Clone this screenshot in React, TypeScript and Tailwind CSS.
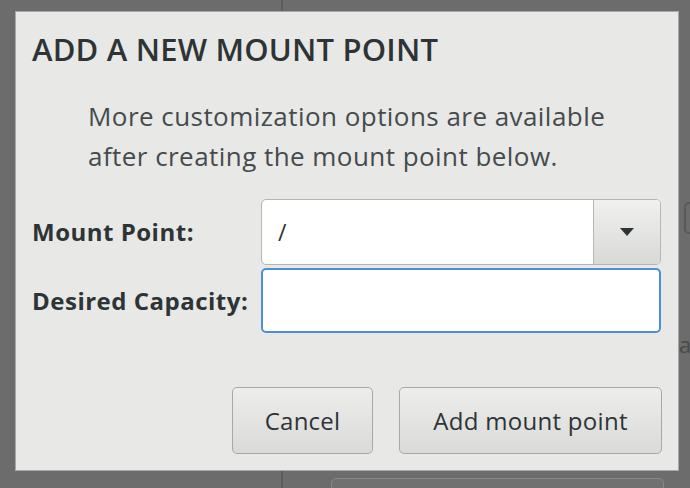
export default function App() {
  return (
    <div className="relative w-[690px] h-[488px] overflow-hidden bg-[#6c6c6c] font-['Open_Sans',sans-serif]">
      {/* stuff behind the dialog */}
      <div className="absolute left-[281px] top-0 h-full w-[2px] bg-[#5c5c5c]" />
      <div className="absolute left-[684px] top-[202px] w-[20px] h-[32px] rounded-[5px] border-2 border-[#5a5a5a]" />
      <div className="absolute left-[679px] top-[328px] text-[22px] text-[#4a4a4a]">a</div>
      <div className="absolute left-[331px] top-[478px] w-[333px] h-[20px] rounded-t-[5px] border border-[#888] bg-[#707070]" />

      {/* dialog */}
      <div className="absolute left-[15px] top-[11px] w-[664px] h-[460px] bg-[#e8e8e7] border border-[#a8a8a8] flex flex-col text-[#2e3436]">
        <h1 className="pl-[16px] pt-[17px] text-[31px] leading-[40px] font-semibold tracking-[0.2px]">
          ADD A NEW MOUNT POINT
        </h1>
        <p className="pl-[72px] pt-[27px] text-[26px] leading-[40px] tracking-[0.45px] text-[#454b4d]">
          More customization options are available
          <br />
          after creating the mount point below.
        </p>

        <div className="mt-[23px] pr-[16px] grid grid-cols-[245px_400px] gap-y-[3px] items-center">
          <label className="pl-[16px] text-[24px] font-bold tracking-[0.5px]">Mount Point:</label>
          <div className="flex h-[66px] rounded-[5px] border border-[#b6b6b3] bg-white overflow-hidden">
            <div className="flex-1 flex items-center pl-[16px] text-[23px]">/</div>
            <div className="w-[67px] flex items-center justify-center border-l border-[#b6b6b3] bg-gradient-to-b from-[#f0f0ef] to-[#d9d9d8]">
              <svg width="14" height="8" viewBox="0 0 14 8">
                <path d="M0 0h14L7 8z" fill="#2e3436" />
              </svg>
            </div>
          </div>
          <label className="pl-[16px] text-[24px] font-bold tracking-[0.5px]">Desired Capacity:</label>
          <div className="h-[65px] rounded-[5px] border-2 border-[#4a90d9] bg-white" />
        </div>

        <div className="mt-auto mb-[16px] pr-[16px] flex justify-end gap-[26px]">
          <button className="w-[141px] h-[67px] rounded-[5px] border border-[#a8a8a6] bg-gradient-to-b from-[#ededec] to-[#dadad9] text-[24px] tracking-[0.2px] text-[#2e3436]">
            Cancel
          </button>
          <button className="w-[263px] h-[67px] rounded-[5px] border border-[#a8a8a6] bg-gradient-to-b from-[#ededec] to-[#dadad9] text-[24px] tracking-[0.3px] text-[#2e3436]">
            Add mount point
          </button>
        </div>
      </div>
    </div>
  );
}
